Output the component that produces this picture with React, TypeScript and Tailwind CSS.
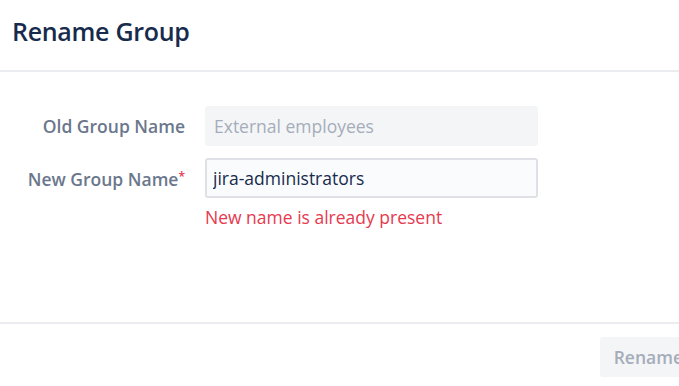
export default function App() {
  return (
    <div
      className="flex h-[386px] w-[679px] flex-col overflow-hidden bg-white"
      style={{ fontFamily: '"Open Sans", "Noto Sans", sans-serif' }}
    >
      {/* header */}
      <div className="flex h-[72px] items-center border-b-2 border-[#ebecf0] pl-3 pb-[6px]">
        <h1 className="text-[25px] font-semibold tracking-[-0.3px] text-[#172b4d]">
          Rename Group
        </h1>
      </div>

      {/* body */}
      <div className="flex h-[250px] flex-col gap-3 pt-[34px]">
        <div className="flex items-center">
          <label className="w-[185px] text-right text-[17.5px] font-semibold text-[#6b778c]">
            Old Group Name
          </label>
          <div className="ml-[20px] flex h-[40px] w-[333px] items-center rounded-[3px] bg-[#f4f5f7] px-[9px] text-[17.5px] text-[#a5adba]">
            External employees
          </div>
        </div>

        <div className="flex items-start">
          <label className="mt-[8px] w-[185px] text-right text-[17.5px] font-semibold text-[#6b778c]">
            New Group Name<span className="relative -top-[5px] text-[12px] text-[#e6394f]">*</span>
          </label>
          <div className="ml-[20px] flex w-[333px] flex-col">
            <input
              readOnly
              value="jira-administrators"
              className="h-[40px] w-full rounded-[3px] border-2 border-[#dfe1e6] bg-[#fafbfc] px-[6px] text-[17.5px] text-[#172b4d] outline-none"
            />
            <span className="mt-[9px] text-[17.5px] leading-[1.2] text-[#e6394f]">
              New name is already present
            </span>
          </div>
        </div>
      </div>

      {/* footer */}
      <div className="flex flex-1 items-start justify-end border-t-2 border-[#ebecf0] pt-[13px]">
        <button className="-mr-[18px] h-[40px] rounded-[3px] bg-[#f4f5f7] px-[14px] text-[17.5px] font-semibold text-[#a5adba]">
          Rename
        </button>
      </div>
    </div>
  );
}
